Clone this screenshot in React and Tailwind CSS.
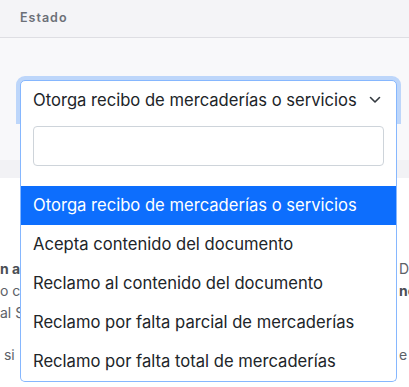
import React from "react";

const options = [
  "Otorga recibo de mercaderías o servicios",
  "Acepta contenido del documento",
  "Reclamo al contenido del documento",
  "Reclamo por falta parcial de mercaderías",
  "Reclamo por falta total de mercaderías",
];

function Chevron() {
  return (
    <svg width="12" height="8" viewBox="0 0 12 8" fill="none">
      <path d="M1.5 1.5L6 6l4.5-4.5" stroke="#343a40" strokeWidth="1.6" strokeLinecap="round" strokeLinejoin="round" />
    </svg>
  );
}

export default function App() {
  return (
    <div className="relative h-[387px] w-full overflow-hidden bg-white font-['Inter',sans-serif] text-[#212529]">
      <div className="flex h-[38px] items-center border-b border-[#dedee3] bg-[#f4f4f7] px-5">
        <span className="text-[12.5px] font-semibold tracking-[0.08em] text-[#6c7078]">Estado</span>
      </div>

      <div className="h-[122px] bg-[#f8f8fa] pl-5 pr-3 pt-[42px]">
        <div className="relative">
          <div className="flex h-[40px] items-center justify-between rounded-t-[5px] border border-[#86b7fe] bg-white pl-3 pr-[15px] shadow-[0_0_0_4px_rgba(13,110,253,0.25)]">
            <span className="text-[16.6px]">{options[0]}</span>
            <Chevron />
          </div>
          <div className="absolute left-0 right-0 top-[39px] z-10 rounded-b-[5px] border border-t-0 border-[#86b7fe] bg-white">
            <div className="px-3 pb-5 pt-[7px]">
              <div className="h-[40px] rounded-[4px] border border-[#ced4da]" />
            </div>
            <ul>
              {options.map((o, i) => (
                <li
                  key={o}
                  className={
                    i === 0
                      ? "flex h-[39px] items-center bg-[#0d6efd] px-3 text-[16.6px] text-white"
                      : "flex h-[39px] items-center px-3 text-[16.6px]"
                  }
                >
                  {o}
                </li>
              ))}
            </ul>
          </div>
        </div>
      </div>

      <div className="h-[18px] bg-[#f2f2f5]" />

      <div className="flex flex-col pt-[80px] text-[14px] leading-[22px] text-[#5c6167]">
        <div className="flex justify-between">
          <span className="font-bold text-[#4a4f55]">n a</span>
          <span className="w-[10px] overflow-hidden whitespace-nowrap">Doc</span>
        </div>
        <div className="flex justify-between">
          <span>o c</span>
          <span className="w-[10px] overflow-hidden whitespace-nowrap font-bold text-[#4a4f55]">no</span>
        </div>
        <div className="flex justify-between">
          <span>al S</span>
          <span></span>
        </div>
        <div className="mt-[20px] flex justify-between">
          <span>&nbsp;si</span>
          <span className="w-[10px] overflow-hidden whitespace-nowrap">e c</span>
        </div>
      </div>
    </div>
  );
}
